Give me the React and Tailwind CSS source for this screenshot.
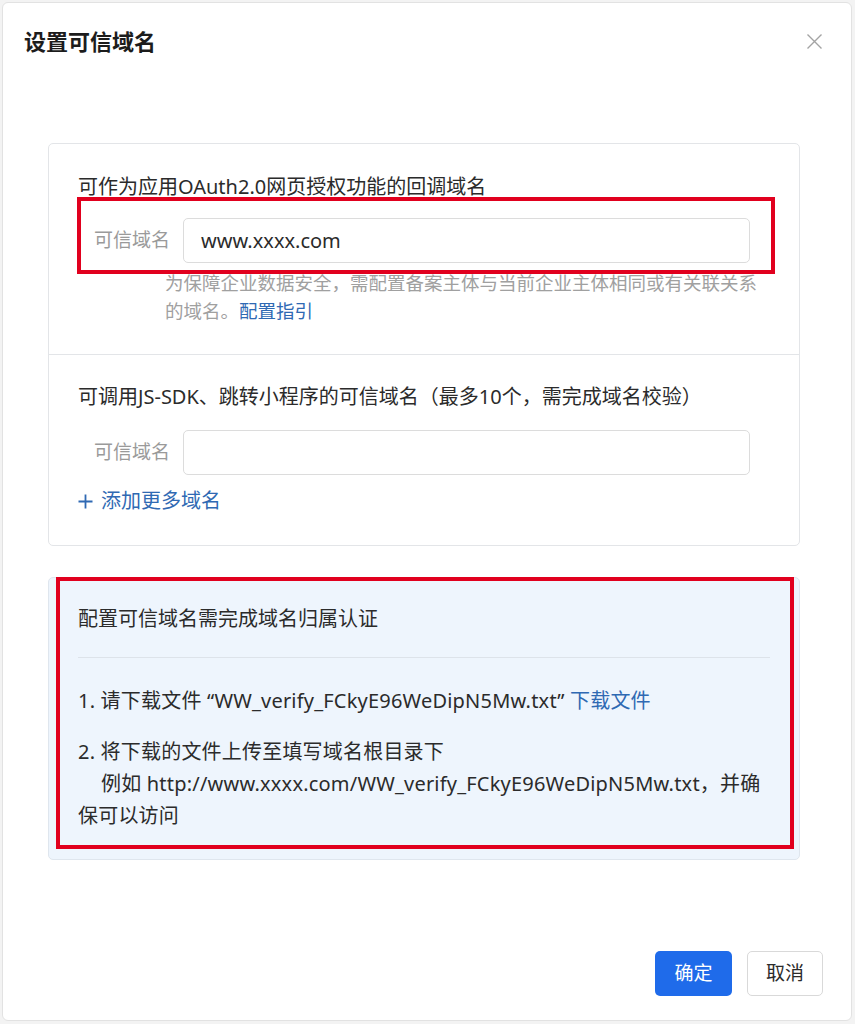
import React from "react";

const RedMark = ({ className }) => (
  <div
    className={`pointer-events-none absolute border-[4px] border-[#e1001e] ${className}`}
  />
);

const DomainRow = ({ value }) => (
  <div className="flex items-center">
    <div className="w-[92px] shrink-0 text-right text-[19px] text-[#9a9a9a]">
      可信域名
    </div>
    <div className="ml-[13px] flex h-[45px] w-[567px] items-center rounded-[5px] border border-[#dcdcdc] bg-white px-[17px] text-[20px] text-[#2b2b2b]">
      {value}
    </div>
  </div>
);

const App = () => {
  return (
    <div className="h-[1024px] w-[855px] bg-[#f3f3f3] p-[2px] font-['Noto_Sans','Noto_Sans_CJK_SC',sans-serif]">
      <div className="relative flex h-[1019px] w-[850px] flex-col rounded-md border border-[#e2e2e2] bg-white">
        {/* Header */}
        <div className="flex h-[76px] items-center justify-between pl-[21px] pr-[28px]">
          <h1 className="text-[22px] font-bold leading-none text-[#1c1c1c]">
            设置可信域名
          </h1>
          <svg width="17" height="17" viewBox="0 0 17 17" className="text-[#a3a3a3]">
            <path d="M1.5 1.5L15.5 15.5M15.5 1.5L1.5 15.5" stroke="currentColor" strokeWidth="1.4" />
          </svg>
        </div>

        {/* Domain card */}
        <div className="relative ml-[45px] mt-[64px] w-[752px] rounded-[5px] border border-[#e3e5e8] bg-white">
          <RedMark className="left-[28px] top-[53px] h-[77px] w-[698px]" />
          <div className="px-[29px] pb-[29px] pt-[29px]">
            <p className="text-[20px] leading-[28px] text-[#2b2b2b]">
              可作为应用OAuth2.0网页授权功能的回调域名
            </p>
            <div className="mt-[17px]">
              <DomainRow value="www.xxxx.com" />
            </div>
            <p className="ml-[87px] mt-[6px] whitespace-nowrap text-[18.5px] leading-[28px] text-[#a0a0a0]">
              为保障企业数据安全，需配置备案主体与当前企业主体相同或有关联关系
              <br />
              的域名。<span className="text-[#2f69b3]">配置指引</span>
            </p>
          </div>
          <div className="border-t border-[#e3e5e8] px-[29px] pb-[30px] pt-[28px]">
            <p className="text-[20px] leading-[28px] text-[#2b2b2b]">
              可调用JS-SDK、跳转小程序的可信域名（最多10个，需完成域名校验）
            </p>
            <div className="mt-[19px]">
              <DomainRow value="" />
            </div>
            <div className="mt-[12px] flex items-center gap-[8px] text-[20px] leading-[28px] text-[#2f69b3]">
              <svg width="15" height="15" viewBox="0 0 15 15">
                <path d="M7.5 0.5V14.5M0.5 7.5H14.5" stroke="currentColor" strokeWidth="1.8" />
              </svg>
              添加更多域名
            </div>
          </div>
        </div>

        {/* Verification notice */}
        <div className="relative ml-[45px] mt-[31px] w-[752px] rounded-[5px] border border-[#dfe6ee] bg-[#eef5fd] px-[29px] pb-[27px] pt-[27px] text-[20px] text-[#2b2b2b]">
          <RedMark className="left-[7px] top-[-1px] h-[272px] w-[738px]" />
          <p className="leading-[28px]">配置可信域名需完成域名归属认证</p>
          <div className="mt-[24px] border-t border-[#dde3ea]" />
          <p className="mt-[29px] whitespace-nowrap leading-[28px] tracking-[0.2px]">
            1. 请下载文件 “WW_verify_FCkyE96WeDipN5Mw.txt”{" "}
            <span className="text-[#2f69b3]">下载文件</span>
          </p>
          <div className="mt-[21px] whitespace-nowrap leading-[32px] tracking-[0.2px]">
            <p>2. 将下载的文件上传至填写域名根目录下</p>
            <p className="pl-[23px]">
              例如 http://www.xxxx.com/WW_verify_FCkyE96WeDipN5Mw.txt，并确
            </p>
            <p>保可以访问</p>
          </div>
        </div>

        {/* Footer */}
        <div className="mt-auto flex justify-end gap-[15px] pb-[24px] pr-[28px]">
          <button className="h-[45px] w-[77px] rounded-[5px] bg-[#1f6bea] text-[19px] text-white">
            确定
          </button>
          <button className="h-[45px] w-[76px] rounded-[5px] border border-[#d9d9d9] bg-white text-[19px] text-[#2b2b2b]">
            取消
          </button>
        </div>
      </div>
    </div>
  );
};

export default App;
